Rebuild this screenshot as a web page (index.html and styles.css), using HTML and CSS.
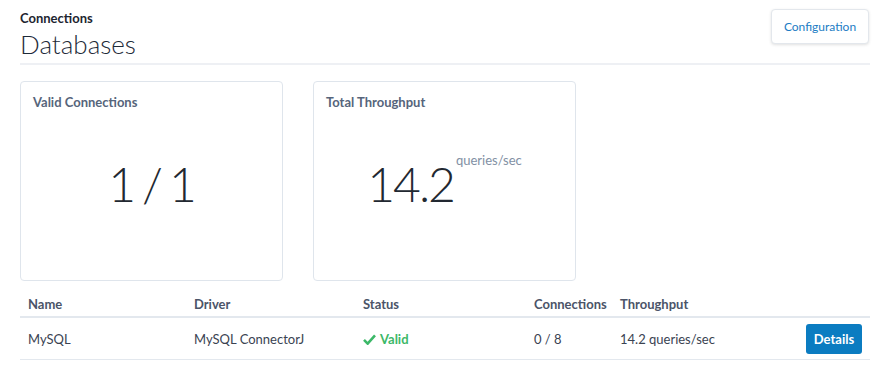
FILE: index.html
```html
<!DOCTYPE html>
<html lang="en">
<head>
  <meta charset="UTF-8">
  <title>Databases</title>
  <link rel="stylesheet" href="styles.css">
</head>
<body>
  <div class="page">
    <div class="page-header">
      <div class="titles">
        <div class="crumb">Connections</div>
        <h1>Databases</h1>
      </div>
      <button class="config-btn">Configuration</button>
    </div>

    <div class="cards">
      <div class="card">
        <div class="card-title">Valid Connections</div>
        <div class="card-value">
          <span class="big">1 / 1</span>
        </div>
      </div>
      <div class="card">
        <div class="card-title">Total Throughput</div>
        <div class="card-value">
          <span class="big">14.2</span><span class="unit">queries/sec</span>
        </div>
      </div>
    </div>

    <table class="db-table">
      <colgroup>
        <col style="width: 166px">
        <col style="width: 169px">
        <col style="width: 171px">
        <col style="width: 86px">
        <col>
        <col>
      </colgroup>
      <thead>
        <tr>
          <th>Name</th>
          <th>Driver</th>
          <th>Status</th>
          <th class="tight">Connections</th>
          <th>Throughput</th>
          <th></th>
        </tr>
      </thead>
      <tbody>
        <tr>
          <td>MySQL</td>
          <td>MySQL ConnectorJ</td>
          <td class="valid">
            <svg class="check" viewBox="0 0 14 12" width="13" height="11">
              <path d="M1 6.5 L5 10.5 L13 1.5" fill="none" stroke="#3cb868" stroke-width="2.8"/>
            </svg>Valid
          </td>
          <td>0 / 8</td>
          <td>14.2 queries/sec</td>
          <td class="actions"><button class="details-btn">Details</button></td>
        </tr>
      </tbody>
    </table>
  </div>
</body>
</html>
```

FILE: styles.css
```css
body {
  margin: 0;
  font-family: Lato, "Open Sans", sans-serif;
  color: #333c48;
  background-color: #fff;
}

.page {
  width: 850px;
  padding: 9px 15px 0 20px;
}

.page-header {
  display: flex;
  justify-content: space-between;
  align-items: flex-start;
  border-bottom: 2px solid #eef0f4;
  padding-bottom: 4px;
}

.crumb {
  font-size: 13px;
  font-weight: bold;
  color: #1d2530;
  margin-top: 1px;
}

h1 {
  margin: 3px 0 0;
  font-size: 26px;
  font-weight: 300;
  color: #1d2a38;
  line-height: 30px;
}

.config-btn {
  font-family: inherit;
  font-size: 12px;
  color: #1b7cc4;
  background: #fff;
  border: 1px solid #e3e7ec;
  border-radius: 4px;
  box-shadow: 0 1px 3px rgba(0, 0, 0, 0.12);
  width: 98px;
  height: 35px;
  padding: 0;
  margin-right: 1px;
}

.cards {
  display: flex;
  gap: 30px;
  margin-top: 16px;
}

.card {
  width: 261px;
  height: 198px;
  border: 1px solid #dfe5ec;
  border-radius: 4px;
  display: flex;
  flex-direction: column;
}

.card-title {
  font-size: 13px;
  font-weight: bold;
  color: #56657b;
  padding: 12px 12px 0;
}

.card-value {
  flex: 1;
  display: flex;
  justify-content: center;
  align-items: flex-start;
  padding-top: 46px;
}

.big {
  font-size: 48px;
  font-weight: 300;
  color: #222831;
  line-height: 56px;
  letter-spacing: -2px;
  word-spacing: -3px;
}

.unit {
  font-size: 13px;
  color: #8290a4;
  margin-top: -4px;
  margin-left: 2px;
}

.db-table {
  width: 850px;
  margin-top: 9px;
  border-collapse: collapse;
  font-size: 13px;
}

.db-table th {
  text-align: left;
  font-weight: bold;
  color: #4b5468;
  padding: 6px 8px 4px;
  border-bottom: 2px solid #e3e8ee;
  white-space: nowrap;
}

.db-table th.tight {
  padding-right: 2px;
}

.db-table td {
  height: 41px;
  padding: 0 8px;
  color: #3a4352;
  border-bottom: 1px solid #e3e8ee;
  white-space: nowrap;
}

.db-table td.valid {
  color: #3cb868;
  font-weight: bold;
}

.check {
  margin-right: 4px;
  vertical-align: -1px;
}

.actions {
  text-align: right;
}

.details-btn {
  font-family: inherit;
  font-size: 13px;
  font-weight: bold;
  color: #fff;
  background-color: #0b7cc1;
  border: none;
  border-radius: 3px;
  width: 56px;
  height: 30px;
  padding: 0;
}
```
